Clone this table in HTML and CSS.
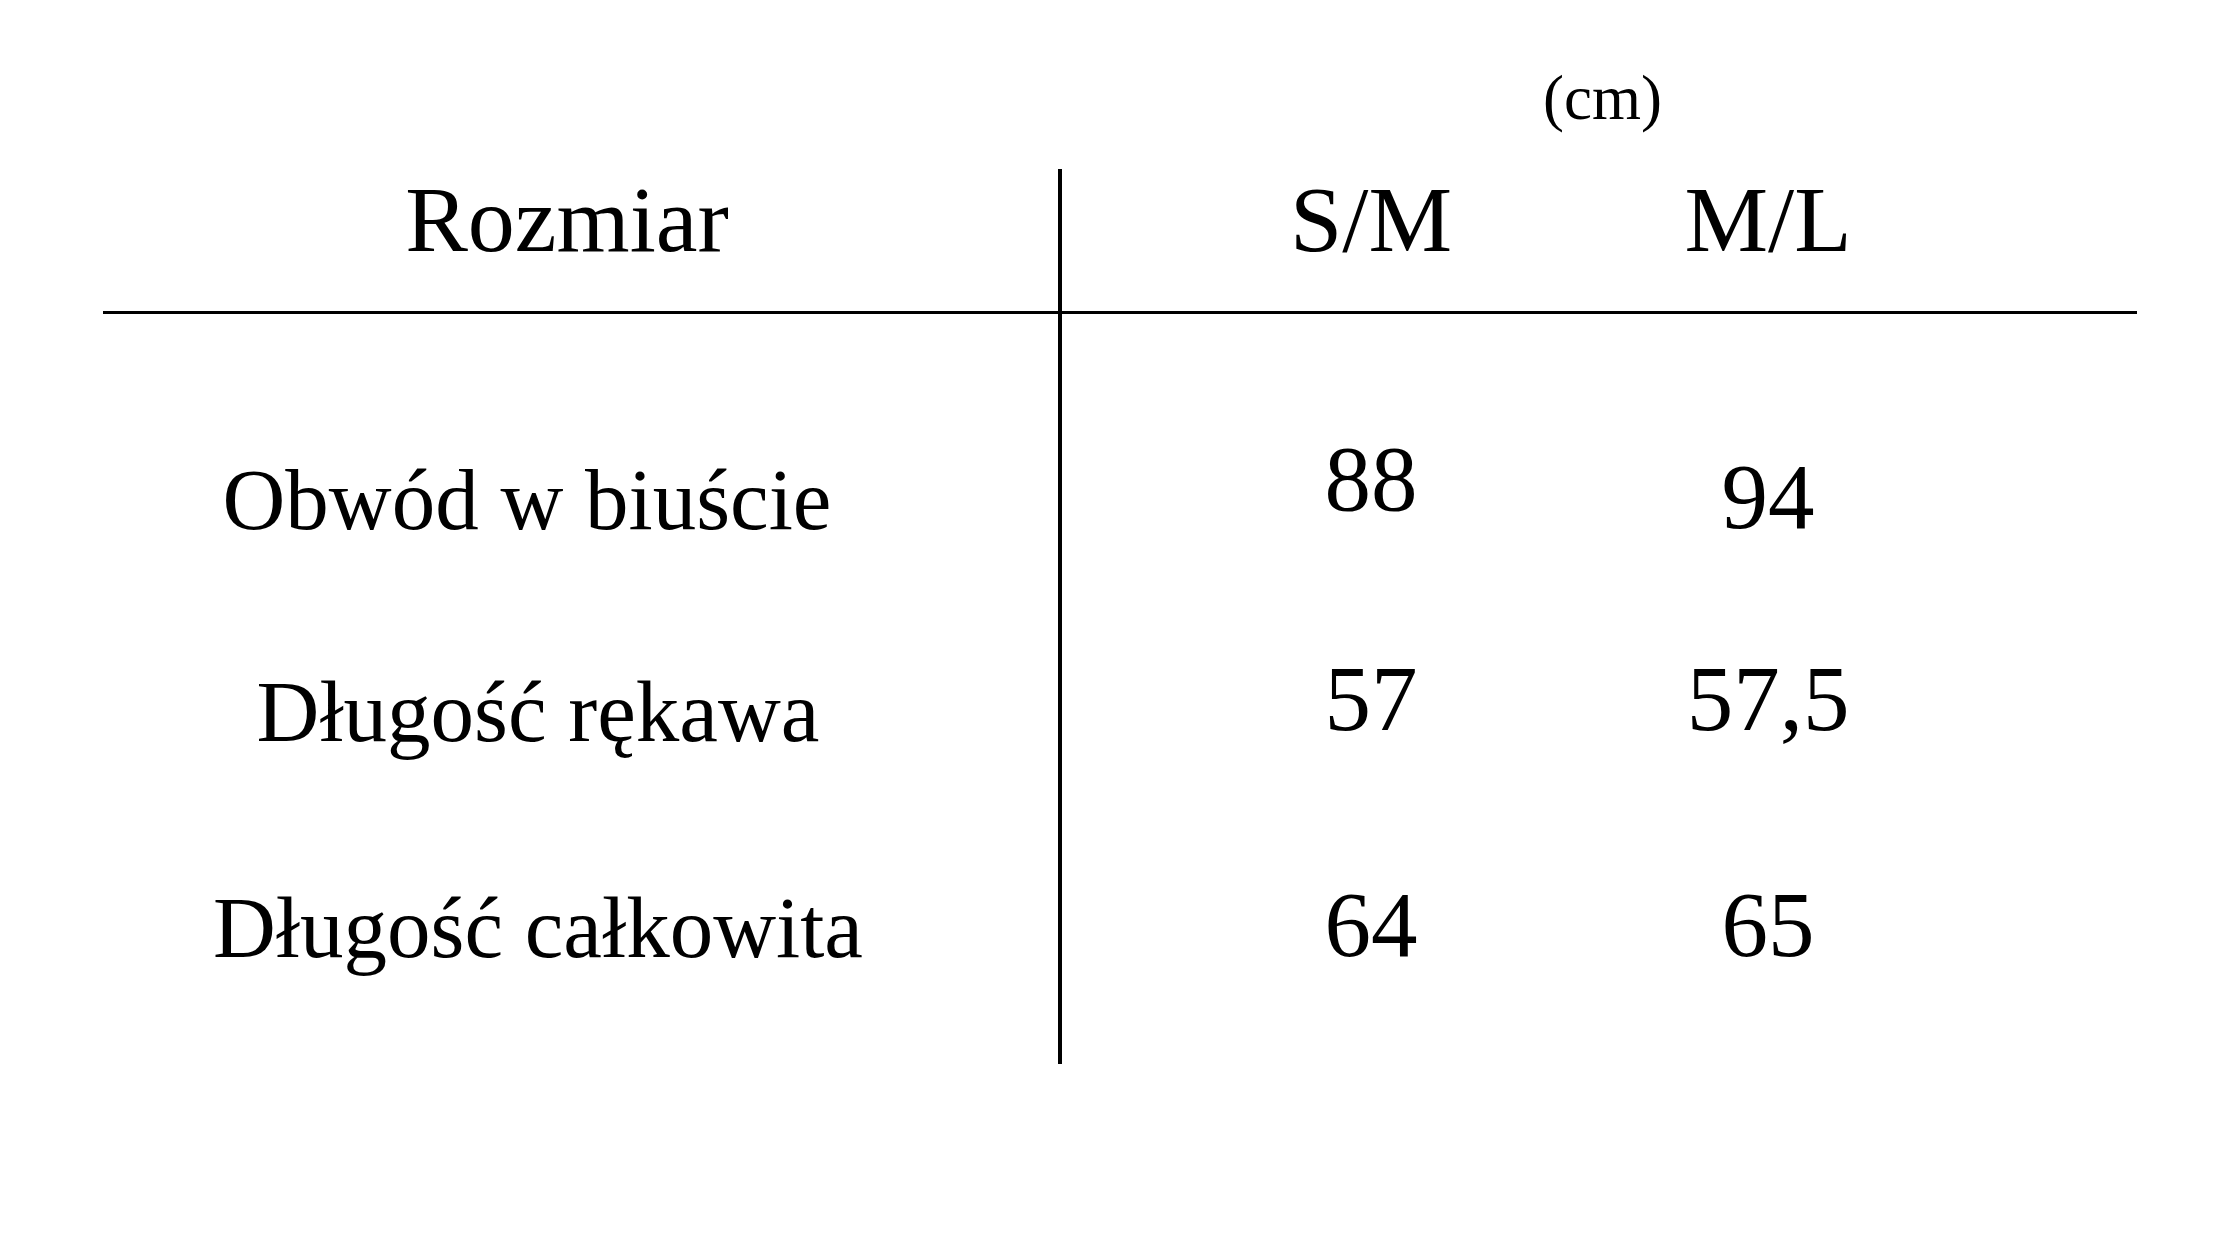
FILE: index.html
```html
<!DOCTYPE html>
<html lang="pl">
<head>
<meta charset="utf-8">
<title>Tabela rozmiarów</title>
<link rel="stylesheet" href="styles.css">
</head>
<body>
<main class="chart">
  <div class="unit">(cm)</div>
  <div class="divider"></div>
  <div class="head head--label">Rozmiar</div>
  <div class="head c1">S/M</div>
  <div class="head c2">M/L</div>
  <div class="rule"></div>

  <div class="label r1 label--wide">Obwód w biuście</div>
  <div class="num r1 c1 raise-lg">88</div>
  <div class="num r1 c2">94</div>

  <div class="label r2">Długość rękawa</div>
  <div class="num r2 c1 raise-md">57</div>
  <div class="num r2 c2 raise-md">57,5</div>

  <div class="label r3">Długość całkowita</div>
  <div class="num r3 c1">64</div>
  <div class="num r3 c2">65</div>
</main>
</body>
</html>
```

FILE: styles.css
```css
html, body {
  margin: 0;
  background: #fff;
}

.chart {
  display: grid;
  grid-template-columns: 955px 4px 618px 176px 1fr;
  grid-template-rows: 169px 142px 3px 229px 212px 216px 93px;
  width: 2034px;
  margin-left: 103px;
  font-family: "Liberation Serif", "Times New Roman", serif;
  color: #000;
  line-height: 1;
}

.unit {
  grid-column: 3 / 6;
  grid-row: 1;
  align-self: end;
  text-align: center;
  font-size: 63px;
  padding-bottom: 39px;
  padding-left: 6px;
}

.divider {
  grid-column: 2;
  grid-row: 2 / 8;
  background: #000;
}

.rule {
  grid-column: 1 / 6;
  grid-row: 3;
  background: #000;
}

.head {
  grid-row: 2;
  align-self: end;
  text-align: center;
  font-size: 94px;
  padding-bottom: 45px;
}

.head--label {
  grid-column: 1;
  padding-right: 27px;
}

.c1 { grid-column: 3; }
.c2 { grid-column: 4; }
.r1 { grid-row: 4; }
.r2 { grid-row: 5; }
.r3 { grid-row: 6; }

.label {
  grid-column: 1;
  align-self: end;
  text-align: center;
  font-size: 87px;
  padding-right: 85px;
}

.label--wide {
  padding-right: 107px;
}

.num {
  align-self: end;
  text-align: center;
  font-size: 93px;
  white-space: nowrap;
}

.raise-lg { padding-bottom: 18px; }
.raise-md { padding-bottom: 10px; }
```
